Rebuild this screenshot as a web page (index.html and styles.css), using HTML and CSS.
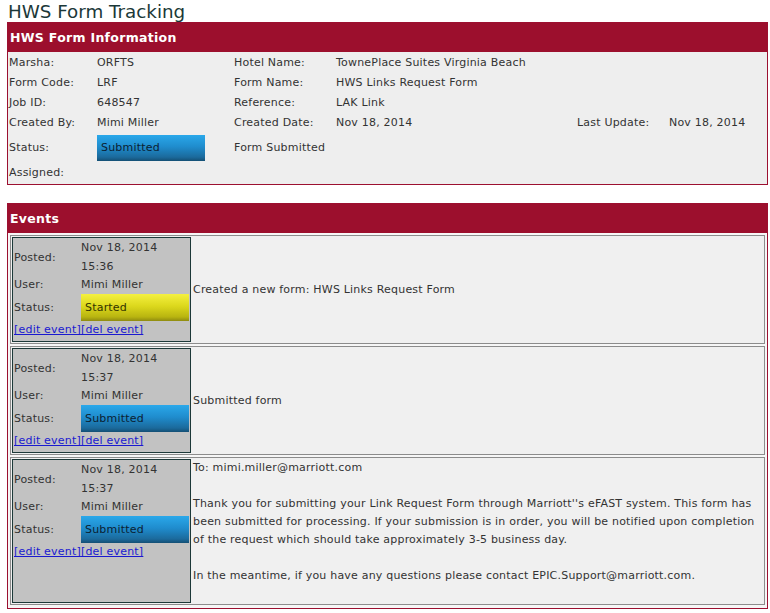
FILE: index.html
```html
<!DOCTYPE html>
<html>
<head>
<meta charset="utf-8">
<link rel="stylesheet" href="styles.css">
</head>
<body>
<div class="page">
  <h1 class="title">HWS Form Tracking</h1>

  <div class="panel">
    <div class="panel-head">HWS Form Information</div>
    <div class="info">
      <div class="lbl">Marsha:</div><div class="val">ORFTS</div>
      <div class="lbl">Hotel Name:</div><div class="val span3">TownePlace Suites Virginia Beach</div>

      <div class="lbl">Form Code:</div><div class="val">LRF</div>
      <div class="lbl">Form Name:</div><div class="val span3">HWS Links Request Form</div>

      <div class="lbl">Job ID:</div><div class="val">648547</div>
      <div class="lbl">Reference:</div><div class="val span3">LAK Link</div>

      <div class="lbl">Created By:</div><div class="val">Mimi Miller</div>
      <div class="lbl">Created Date:</div><div class="val">Nov 18, 2014</div>
      <div class="lbl">Last Update:</div><div class="val">Nov 18, 2014</div>

      <div class="lbl tall">Status:</div><div class="val tall"><span class="badge blue">Submitted</span></div>
      <div class="val tall span4">Form Submitted</div>

      <div class="lbl">Assigned:</div><div class="val span5"></div>
    </div>
  </div>

  <div class="panel events-panel">
    <div class="panel-head">Events</div>
    <div class="events">
      <div class="event">
        <div class="meta">
          <div class="m-lbl">Posted:</div><div class="m-val m-date">Nov 18, 2014<br>15:36</div>
          <div class="m-lbl m-user">User:</div><div class="m-val m-user">Mimi Miller</div>
          <div class="m-lbl">Status:</div><div class="m-val"><span class="badge yellow">Started</span></div>
          <div class="links"><a href="#">[edit event]</a><a href="#">[del event]</a></div>
        </div>
        <div class="msg center">Created a new form: HWS Links Request Form</div>
      </div>

      <div class="event">
        <div class="meta">
          <div class="m-lbl">Posted:</div><div class="m-val m-date">Nov 18, 2014<br>15:37</div>
          <div class="m-lbl m-user">User:</div><div class="m-val m-user">Mimi Miller</div>
          <div class="m-lbl">Status:</div><div class="m-val"><span class="badge blue">Submitted</span></div>
          <div class="links"><a href="#">[edit event]</a><a href="#">[del event]</a></div>
        </div>
        <div class="msg center">Submitted form</div>
      </div>

      <div class="event">
        <div class="meta">
          <div class="m-lbl">Posted:</div><div class="m-val m-date">Nov 18, 2014<br>15:37</div>
          <div class="m-lbl m-user">User:</div><div class="m-val m-user">Mimi Miller</div>
          <div class="m-lbl">Status:</div><div class="m-val"><span class="badge blue">Submitted</span></div>
          <div class="links"><a href="#">[edit event]</a><a href="#">[del event]</a></div>
        </div>
        <div class="msg long">
          <p>To: mimi.miller@marriott.com</p>
          <p>Thank you for submitting your Link Request Form through Marriott''s eFAST system. This form has been submitted for processing. If your submission is in order, you will be notified upon completion of the request which should take approximately 3-5 business day.</p>
          <p>In the meantime, if you have any questions please contact EPIC.Support@marriott.com.</p>
        </div>
      </div>
    </div>
  </div>
</div>
</body>
</html>
```

FILE: styles.css
```css
html, body {
  margin: 0;
  padding: 0;
  background: #ffffff;
}

body {
  font-family: "DejaVu Sans", Verdana, sans-serif;
  font-size: 11px;
  letter-spacing: 0.2px;
  color: #333333;
}

.page {
  padding-left: 7px;
  width: 761px;
}

.title {
  margin: 0;
  padding: 2px 0 0 1px;
  box-sizing: border-box;
  font-size: 18.3px;
  font-weight: normal;
  letter-spacing: 0;
  line-height: 20px;
  height: 22px;
  color: #1b3838;
}

.panel {
  border: 1px solid #9c1030;
  background: #eeeeee;
}

.panel-head {
  background: #9c0f2d;
  color: #ffffff;
  font-weight: bold;
  font-size: 12.5px;
  letter-spacing: 0.3px;
  height: 29px;
  line-height: 29px;
  padding-left: 2px;
}

.info {
  display: grid;
  grid-template-columns: 88px 137px 102px 241px 92px 1fr;
  grid-template-rows: 20px 20px 20px 20px 30px 20px;
  padding: 1px 0 1px 1px;
}

.info > div {
  line-height: 20px;
  white-space: nowrap;
}

.info .tall {
  height: 30px;
  line-height: 30px;
}

.info .span3 { grid-column: span 3; }
.info .span4 { grid-column: span 4; }
.info .span5 { grid-column: span 5; }

.badge {
  display: inline-block;
  box-sizing: border-box;
  width: 108px;
  height: 27px;
  line-height: 27px;
  padding-left: 4px;
  vertical-align: middle;
}

.info .badge {
  height: 26px;
  line-height: 26px;
}

.badge.blue {
  background: linear-gradient(to bottom, #2aa8ea 0%, #1f8ccd 45%, #1b6a9c 85%, #144f74 100%);
  color: #0a2233;
}

.badge.yellow {
  background: linear-gradient(to bottom, #f4f040 0%, #dcd81c 45%, #b8b410 85%, #8e8a10 100%);
  color: #333300;
}

.events-panel {
  margin-top: 18px;
}

.events {
  background: #f6f6f6;
  padding: 2px 2px 3px 2px;
  display: flex;
  flex-direction: column;
  gap: 2px;
}

.event {
  border: 1px solid #8c8c8c;
  padding: 1px;
  display: flex;
  background: #f0f0f0;
}

.meta {
  width: 179px;
  box-sizing: border-box;
  border: 1px solid #1c3838;
  background: #c2c2c2;
  display: grid;
  grid-template-columns: 67px 108px;
  grid-template-rows: 38px 17px 28px 17px;
  align-content: start;
  padding: 0 0 3px 1px;
}

.m-lbl, .m-val {
  white-space: nowrap;
  align-self: center;
}

.m-date {
  line-height: 19px;
}

.m-user {
  line-height: 17px;
}

.m-val .badge {
  display: block;
  margin-top: 1px;
}

.links {
  grid-column: span 2;
  line-height: 17px;
}

.links a {
  color: #1a1ad0;
  text-decoration: underline;
}

.msg {
  flex: 1;
  padding-left: 2px;
  line-height: 18px;
}

.msg.center {
  display: flex;
  align-items: center;
}

.msg.long {
  padding-bottom: 18px;
}

.msg.long p {
  margin: 0 0 18px 0;
}

.msg.long p:last-child {
  margin-bottom: 0;
}
```
